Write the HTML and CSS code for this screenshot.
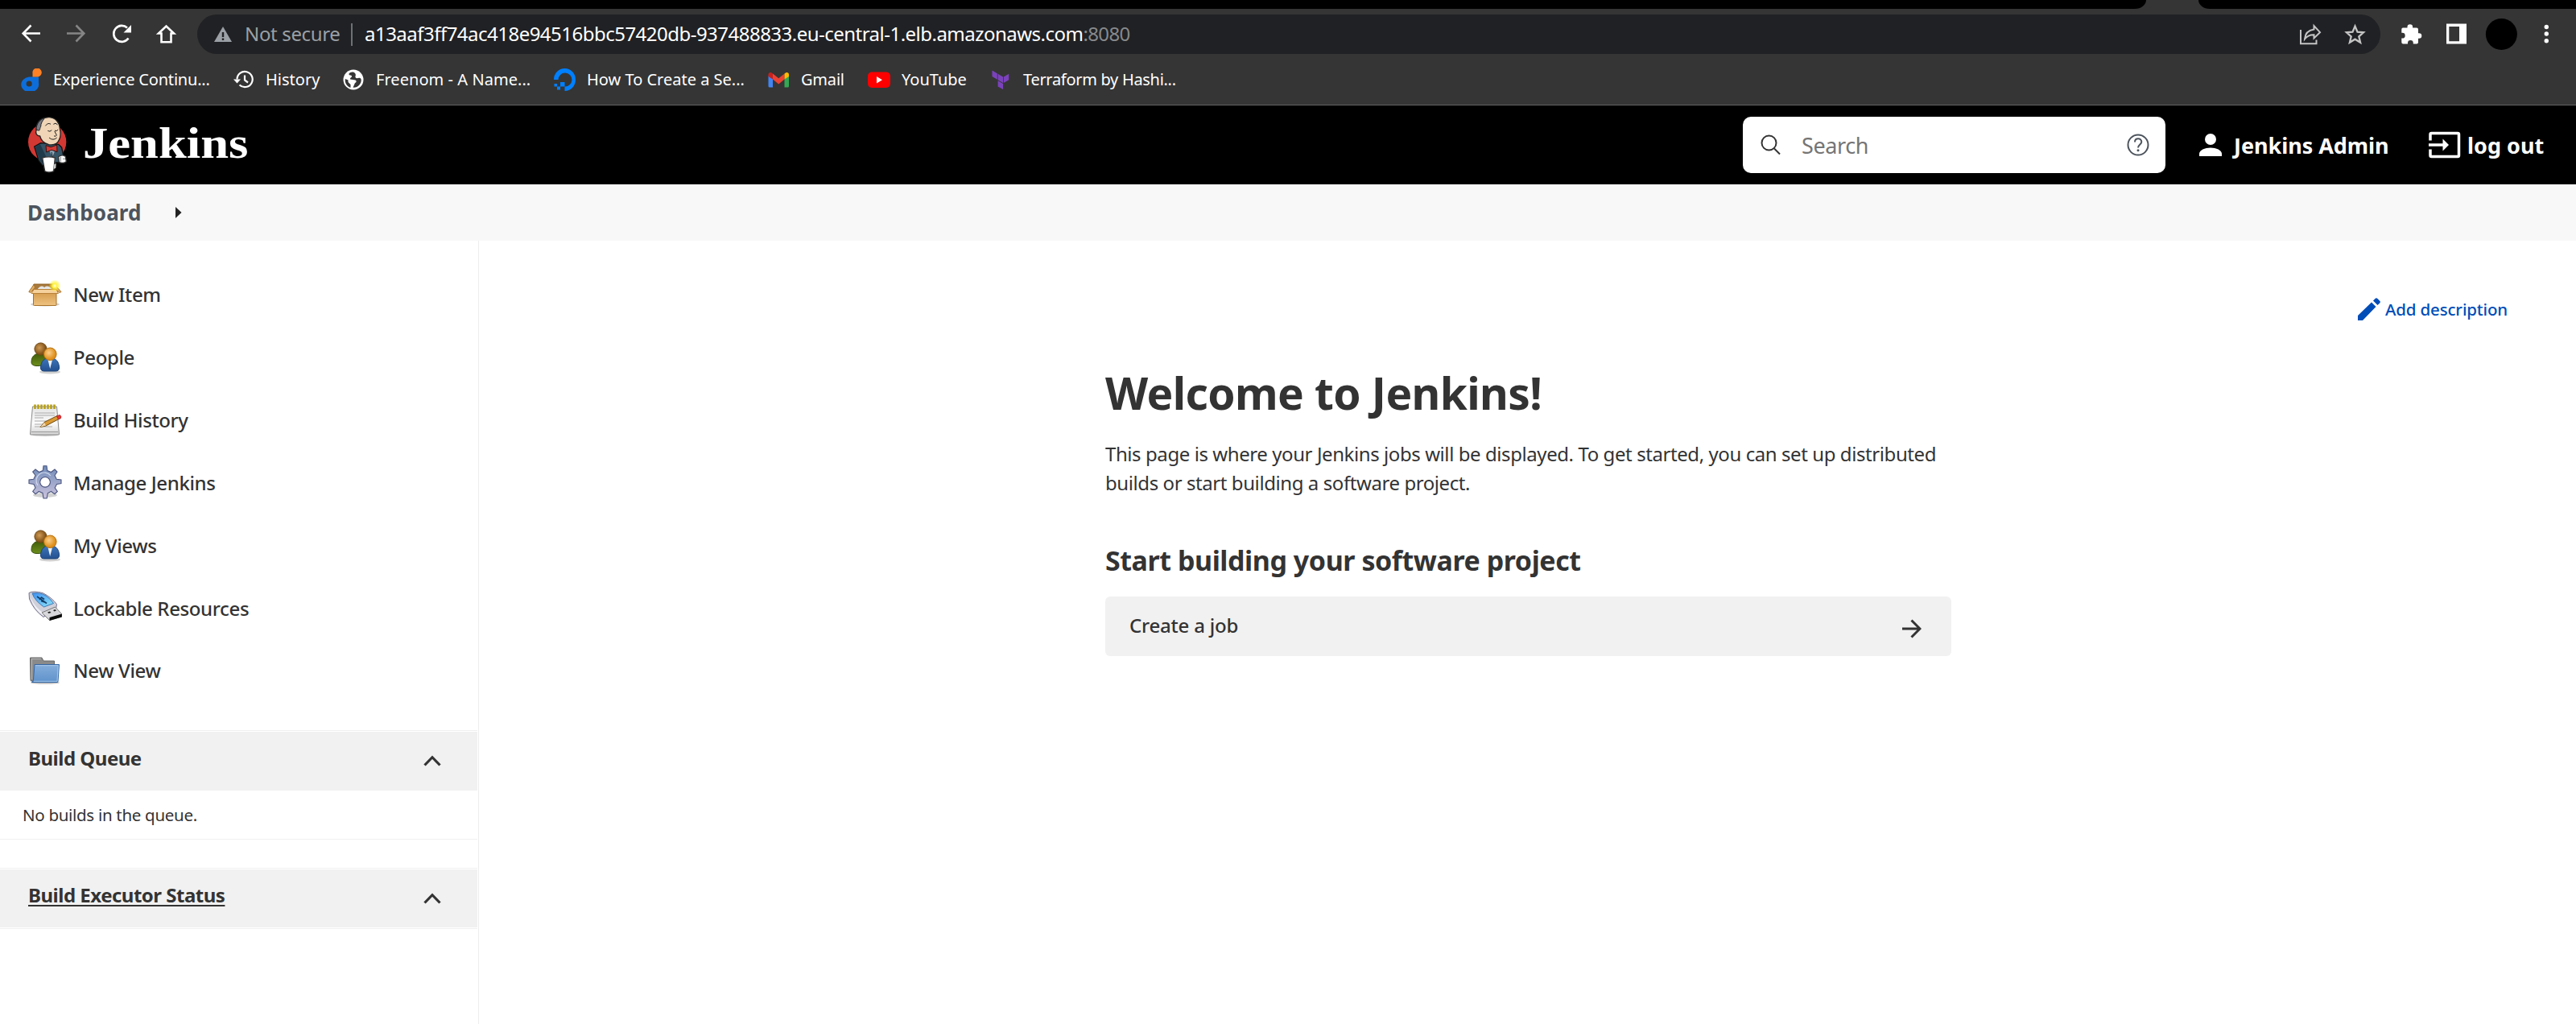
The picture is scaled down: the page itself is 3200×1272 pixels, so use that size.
FILE: index.html
```html
<!DOCTYPE html>
<html lang="en">
<head>
<meta charset="utf-8">
<title>Dashboard [Jenkins]</title>
<link rel="stylesheet" href="styles.css">
</head>
<body>
<div class="browser">
  <div class="tabstrip"><div class="tabs-left"></div><div class="tabs-right"></div></div>
  <div class="toolbar">
    <svg class="nav-icons" width="245" height="49" viewBox="0 18 245 49" fill="none" stroke="#fff" stroke-width="2.6">
      <path d="M50 41.5H29M38.5 31.5L28.7 41.5L38.5 51.5"/>
      <path stroke="#868686" d="M83 41.5H104M94.500 31.5L104.300 41.5L94.500 51.5"/>
      <path d="M159.500 47.500A10 10 0 1 1 158 34.500"/><path fill="#fff" stroke="none" d="M163 31V40.500H153.500Z"/>
      <path d="M200.500 52.300V41.500H197L206.500 32.500L216 41.500H212.500V52.300Z"/>
    </svg>
    <div class="omnibox">
      <svg width="22" height="20" viewBox="0 0 22 20"><path fill="#9aa0a6" d="M11 0L22 19H0Z"/><path stroke="#202124" stroke-width="2.4" d="M11 7V13M11 14.600V17"/></svg>
      <span class="insecure">Not secure</span>
      <i class="divider"></i>
      <span class="url">a13aaf3ff74ac418e94516bbc57420db-937488833.eu-central-1.elb.amazonaws.com</span><span class="port">:8080</span>
      <svg class="omni-actions" width="84" height="28" viewBox="2856 29 84 28" fill="none" stroke="#c4c4c4" stroke-width="2">
        <path d="M2858 37V54.200H2877.500V49.500M2863 48.500C2863.500 41 2868 37.500 2874.500 36.500V32L2882 40.200L2874.500 47.500V43.200C2869.500 43 2866 44.500 2863 48.500Z"/>
        <path stroke-width="2.300" d="M2925.500 32.500L2928.500 39.700L2936 40.300L2930.300 45.300L2932.100 52.800L2925.500 48.700L2918.900 52.800L2920.700 45.300L2915 40.300L2922.500 39.700Z"/>
      </svg>
    </div>
    <svg class="browser-icons" width="243" height="49" viewBox="2957 18 243 49" fill="#fff">
      <path d="M2985 34.500H2990.500V33.500A3.300 3.300 0 0 1 2997.100 33.500V34.500H3002Q3004 34.500 3004 36.500V41.200H3005A3.300 3.300 0 0 1 3005 47.800H3004V52.500Q3004 54.500 3002 54.500H2997.800V53.500A3.300 3.300 0 0 0 2991 53.500V54.500H2985.300Q2983.300 54.500 2983.300 52.500V47.600H2984.300A3.300 3.300 0 0 0 2984.300 40.800H2983.300V36.500Q2983.300 34.500 2985 34.500Z"/>
      <path fill-rule="evenodd" d="M3039 29.500H3064V54.500H3039ZM3042.300 33H3055V51.200H3042.300Z"/>
      <circle cx="3107.400" cy="42.500" r="19.500" fill="#000"/>
      <circle cx="3163.300" cy="33.500" r="2.700"/><circle cx="3163.300" cy="42" r="2.700"/><circle cx="3163.300" cy="50.700" r="2.700"/>
    </svg>
  </div>
  <div class="bookmarks">
    <div class="bm bm-1"><svg viewBox="0 0 28 28"><path fill="#0d6edb" d="M12 10.500H24V18A11 9.500 0 1 1 12 10.500Z"/><circle cx="12.200" cy="19" r="3.600" fill="#353535"/><path fill="#ff8125" d="M16.500 10.500V6A5.700 5.500 0 1 1 22.500 10.500Z"/></svg><span>Experience Continu...</span></div>
    <div class="bm bm-2"><svg viewBox="0 0 28 28" fill="none" stroke="#fff" stroke-width="2.200"><path d="M6.500 13.500A9.600 9.600 0 1 1 9.500 20.500M16 8.500V14.500L20 17.500"/><path fill="#fff" stroke="none" d="M2 13.500H11L6.500 18.500Z"/></svg><span>History</span></div>
    <div class="bm bm-3"><svg viewBox="0 0 28 28"><circle cx="14" cy="14" r="12.500" fill="#fff"/><path fill="#353535" d="M14 4.500C10 4.500 8 6 8.500 7.500C9 9 11.500 8 12 9.500C12.500 11 9.500 11.500 10 13.500L16.500 14.500C18.500 15.500 17.500 17.500 16 18L13.500 23.700C19 24.500 24 19.500 23.700 14C23.500 12.500 22.500 11 20 12C17.500 12.500 16 11.500 16.500 9.500C17.500 8 16.500 5.500 14 4.500ZM3.800 13C3 19 7.500 23.500 10.500 23.700V20L7.500 17V14.500Z"/></svg><span>Freenom - A Name...</span></div>
    <div class="bm bm-4"><svg viewBox="0 0 28 28" fill="#0080ff"><path d="M14.500 28V22.500A8.500 8.500 0 1 0 6.500 14H1A13.500 14 0 1 1 14.500 28ZM9 17H14.500V22.500H9ZM5 22.500H9V26.500H5ZM1.500 19H5V22.500H1.500Z"/></svg><span>How To Create a Se...</span></div>
    <div class="bm bm-5"><svg viewBox="0 0 28 28"><path fill="#4285f4" d="M1.500 9L7 13V23.500H3Q1.500 23.500 1.500 22Z"/><path fill="#34a853" d="M27 9L21.500 13V23.500H25.500Q27 23.500 27 22Z"/><path fill="#ea4335" d="M7 6.500L14.200 12.300L21.500 6.500V13.500L14.200 19.500L7 13.500Z"/><path fill="#c5221f" d="M1.500 10V7.500C1.500 4.500 5 4 7 6.500V13.500Z"/><path fill="#fbbc04" d="M27 10V7.500C27 4.500 23.500 4 21.500 6.500V13.500Z"/></svg><span>Gmail</span></div>
    <div class="bm bm-6"><svg viewBox="0 0 28 28"><rect x="0" y="4.500" width="28" height="19.500" rx="5" fill="#f00"/><path fill="#fff" d="M11 10V18.500L18 14.200Z"/></svg><span>YouTube</span></div>
    <div class="bm bm-7"><svg viewBox="0 0 28 28" fill="#7b42bc"><path d="M3.500 2.500L9.800 6.200V13.800L3.500 10ZM10.600 6.700L17 10.400V18L10.600 14.300ZM17.800 10.400L24.200 6.700V14.200L17.800 18ZM10.600 15.300L17 19V26L10.600 22.500Z"/></svg><span>Terraform by Hashi...</span></div>
  </div>
</div>

<header class="page-header">
  <a class="brand">
    <svg width="50" height="72" viewBox="42 132 150 216" stroke-linejoin="round">
      <circle cx="116" cy="229" r="71" fill="#d33833"/>
      <path fill="#355466" stroke="#111" stroke-width="4" d="M68 246L92 233L158 238L170 250L176 280L172 304L148 306L146 320L98 316L84 298Z"/>
      <path fill="#1f3a4b" d="M70 248L90 238L112 284L100 312L88 296Z"/>
      <path fill="#8fa9bb" d="M118 252L148 252L136 284Z"/>
      <path fill="#f0d6b7" stroke="#222" stroke-width="4" d="M76 172C80 148 102 136 124 137C148 139 162 158 163 178C166 192 168 206 161 220C155 235 140 242 122 239C105 235 92 222 89 207C77 208 71 196 75 186Z"/>
      <path fill="#777b86" stroke="#222" stroke-width="3" d="M75 184C75 162 88 144 106 140C98 152 92 158 92 172C88 176 90 188 84 186Z"/>
      <path fill="none" stroke="#222" stroke-width="3" stroke-linecap="round" d="M110 168Q118 156 128 162M140 162Q147 155 154 164M119 188Q126 193 132 186M145 187Q151 191 156 184M144 190L151 204Q148 211 142 207M124 214Q138 226 151 214"/>
      <path fill="#d33833" stroke="#311" stroke-width="3" d="M111 242L130 248L152 240L153 266L132 259L113 267Z"/>
      <path stroke="#222" stroke-width="3" d="M132 266L136 286"/>
      <path fill="#fff" stroke="#333" stroke-width="4" d="M98 288Q121 281 145 288L140 338Q122 346 107 338Z"/>
      <path fill="#ccc" d="M142 312L149 310L148 326L140 330Z"/>
      <path fill="#fff" stroke="#333" stroke-width="4" d="M158 284Q170 274 184 283L187 302Q174 312 160 304Z"/><path stroke="#444" stroke-width="2" d="M166 284V302M174 292H186"/>
    </svg>
    <span class="brand-name">Jenkins</span>
  </a>
  <div class="search">
    <svg width="26" height="26" viewBox="0 0 26 26" fill="none" stroke="#333" stroke-width="2"><circle cx="10.500" cy="10.500" r="9"/><path d="M17 17.500L24 24.500"/></svg>
    <span class="placeholder">Search</span>
    <svg width="28" height="28" viewBox="0 0 28 28" fill="none" stroke="#4d545d" stroke-width="2"><circle cx="14" cy="14" r="12.500"/><path d="M10 10.500C10 5 18.300 5 18.300 10.300C18.300 13.500 14 13.500 14 17.500"/><circle cx="14" cy="20.800" r="1.500" fill="#4d545d" stroke="none"/></svg>
  </div>
  <a class="user"><svg width="28" height="28" viewBox="0 0 28 28" fill="#fff"><circle cx="14" cy="7" r="7"/><path d="M0 28V25C0 20.500 7 17.500 14 17.500S28 20.500 28 25V28Z"/></svg><span>Jenkins Admin</span></a>
  <a class="logout"><svg width="40" height="34" viewBox="0 0 40 34" fill="none" stroke="#fff" stroke-width="3.500"><path d="M2 11.500V4Q2 2.500 3.500 2.500H36Q37.500 2.500 37.500 4V30Q37.500 31.500 36 31.500H3.500Q2 31.500 2 30V22.500M0 17H19"/><path fill="#fff" stroke="none" d="M17.500 9.500L25 17L17.500 24.500Z"/></svg><span>log out</span></a>
</header>

<nav class="breadcrumb"><span>Dashboard</span><svg width="8" height="14" viewBox="0 0 8 14"><path fill="#222" d="M0 0L7.500 7L0 14Z"/></svg></nav>

<svg class="defs" width="0" height="0">
  <defs>
    <linearGradient id="box" x2="0" y2="1"><stop stop-color="#d49b4c"/><stop offset="1" stop-color="#efc382"/></linearGradient>
    <radialGradient id="glow"><stop stop-color="#fffde0"/><stop offset=".35" stop-color="#fff34a"/><stop offset="1" stop-color="#fff200" stop-opacity="0"/></radialGradient>
    <radialGradient id="brown" cx=".4" cy=".4"><stop stop-color="#d09a55"/><stop offset="1" stop-color="#83551a"/></radialGradient>
    <radialGradient id="orange" cx=".4" cy=".4"><stop stop-color="#fbd08d"/><stop offset="1" stop-color="#e0911c"/></radialGradient>
    <linearGradient id="green" x2="0" y2="1"><stop stop-color="#3f5a0a"/><stop offset="1" stop-color="#6d8f1d"/></linearGradient>
    <linearGradient id="blue" x2="0" y2="1"><stop stop-color="#3d77bd"/><stop offset="1" stop-color="#24508f"/></linearGradient>
    <linearGradient id="gear" x2="0" y2="1"><stop stop-color="#6f8bb8"/><stop offset="1" stop-color="#ccc3dd"/></linearGradient>
    <linearGradient id="paper" x2="0" y2="1"><stop stop-color="#e4e4e4"/><stop offset=".6" stop-color="#fbfbfb"/><stop offset="1" stop-color="#d2d2d2"/></linearGradient>
    <linearGradient id="folder" x2="0" y2="1"><stop stop-color="#84addb"/><stop offset="1" stop-color="#5f92cb"/></linearGradient>
    <linearGradient id="usb" x2="1" y2="1"><stop stop-color="#3f8ff0"/><stop offset="1" stop-color="#8ee6f8"/></linearGradient>
    <symbol id="people" viewBox="0 0 42 42">
      <ellipse cx="27" cy="39" rx="13" ry="2.500" fill="#000" opacity=".18"/>
      <path fill="url(#green)" stroke="#37500a" d="M4 27C4 18 10 16 15.500 16S27 18 27 27Q20 32 10 31.500Q4 31 4 27Z"/>
      <circle cx="15.500" cy="10.500" r="7.600" fill="url(#brown)" stroke="#714812"/>
      <path fill="url(#blue)" stroke="#1f4479" d="M15.500 34C15.500 25 21 21.500 27 21.500S38.500 25 38.500 34Q38.500 38 34 38H20Q15.500 38 15.500 34Z"/>
      <path fill="#eef2f8" d="M24.500 24H30L27.200 35Z"/>
      <circle cx="27.300" cy="16.800" r="7.800" fill="url(#orange)" stroke="#b5700f"/>
    </symbol>
  </defs>
</svg>

<div class="page-body">
  <aside class="side-panel">
    <ul class="tasks">
      <li><svg viewBox="0 0 42 42"><ellipse cx="21" cy="33" rx="18" ry="2.500" fill="#000" opacity=".18"/><path fill="#a77a3e" stroke="#8f5f20" d="M7 8H33L36 16H5Z"/><path fill="#e6e6e6" d="M11 15Q16 8 20 12Q25 8 30 15Z"/><path fill="#e2b06a" stroke="#a8722a" d="M7 8.500L.8 17.500L3 18.500L8.500 12ZM34 10L41 17.500L39 18.500L32.500 13Z"/><path fill="url(#box)" stroke="#a8722a" d="M6.500 18H35V33.500Q35 34.500 34 34.500H7.500Q6.500 34.500 6.500 33.500Z"/><path fill="#f5d19c" stroke="#b9813a" d="M7 14.500H35L37.500 19.500H4Z"/><circle cx="33" cy="10" r="7.500" fill="url(#glow)"/></svg><span>New Item</span></li>
      <li><svg viewBox="0 0 42 42"><use href="#people"/></svg><span>People</span></li>
      <li><svg viewBox="0 0 42 42"><ellipse cx="21" cy="39.500" rx="16" ry="1.500" fill="#000" opacity=".2"/><path fill="url(#paper)" stroke="#8c8c8c" d="M5.500 4H35.500L38.500 38.500Q38.500 39 38 39H3Q2.500 39 2.500 38.500Z"/><path stroke="#999" d="M4 35.500H37"/><path stroke="#aaa" d="M8 12H33M8 15H33M8 18H19M8 22H27M8 26H22M8 29H30"/><path stroke="#b7a018" stroke-width="2.600" d="M8.500 1.500V7M12.500 1.500V7M16.500 1.500V7M20.500 1.500V7M24.500 1.500V7M28.500 1.500V7M32.500 1.500V7"/><path fill="#d99a35" stroke="#6e4a12" d="M15 29.500L20 23.500L36 15.500L38 19.500L22 28Z"/><path fill="#f3dab0" d="M15 29.500L20 24L22 27.500Z"/><path fill="#e33" stroke="#a33" d="M35.500 16L39 14.500Q42 16 40.500 18.500L37.500 20Z"/></svg><span>Build History</span></li>
      <li><svg viewBox="0 0 42 42"><ellipse cx="21" cy="37" rx="15" ry="3" fill="#000" opacity=".18"/><path fill="url(#gear)" fill-rule="evenodd" stroke="#4c5680" stroke-width="1.100" d="M18.300 6.500L19 .8H23L23.700 6.500L28.500 8.500L33 5L36 8L33 12.500L35.200 17.300L41 18V22.500L35.500 23.500L33.200 28L36.300 32.500L33 35.700L28.500 32.500L24.300 34.500L23.200 41H19L18 34.500L13.300 32.500L9 35.700L5.700 32.500L9 28L7 23.500L1 22.500V18L6.800 17.300L9 12.500L5.700 8L9 5L13.500 8.500ZM21 14.500A6.300 6.300 0 1 0 21.100 14.500Z"/><path fill="none" stroke="#dfe5f4" stroke-width="1.200" opacity=".8" d="M12 25A10 10 0 0 1 28 13"/></svg><span>Manage Jenkins</span></li>
      <li><svg viewBox="0 0 42 42"><use href="#people"/></svg><span>My Views</span></li>
      <li><svg viewBox="0 0 42 42"><path fill="#cfd0da" stroke="#77728f" d="M1 2.500Q6-.5 18 2.500Q29 8 35.500 16.500L34.500 23L19 32.500Q7 24 1.500 10Z"/><path fill="#f1f1f5" d="M4 10Q8 20 19.500 28L19.500 31Q7 23 3 9Z"/><path fill="url(#usb)" stroke="#3c78b8" d="M5 3Q15 1.500 22 6Q29 11 31.500 15.500L19.500 20Q8 12 5 3Z"/><path fill="none" stroke="#123d66" stroke-width="1.600" d="M11 7L23 15.500M14 11L16.500 8L20 10.500M16 12.500L20.500 14"/><path fill="#d8d8dc" stroke="#777" d="M17 27L33.500 20L41.500 28.500V32L26.500 36.500Z"/><path fill="#0a0a0a" d="M26.500 33L41.800 28.500V32.500L26.500 37Z"/><path fill="#222" d="M24 26.500L27 25.500L28.500 27L25.500 28ZM31 24L33.500 23L35 24.500L32.500 25.500Z"/></svg><span>Lockable Resources</span></li>
      <li><svg viewBox="0 0 42 42"><ellipse cx="21" cy="36" rx="18" ry="1.800" fill="#000" opacity=".25"/><path fill="#8a8a8a" stroke="#666" d="M2.500 5H17L19 9H32.500V34H4Q3 34 3 33Z"/><path stroke="#b5b5b5" d="M4 6.500H16M4.500 6.500V32"/><path fill="url(#folder)" stroke="#3568a6" d="M8 13.500H38.500L37 34.500Q37 35.500 36 35.500H4.500Q6.500 34 6.500 32Z"/><path fill="none" stroke="#a8c8ea" d="M9 14.700H37.200L36 34.300H7"/></svg><span>New View</span></li>
    </ul>
    <section class="pane">
      <div class="pane-head"><span>Build Queue</span><svg width="22" height="14" viewBox="0 0 22 14"><path fill="none" stroke="#333" stroke-width="3.200" d="M1.500 12.500L11 2.700L20.500 12.500"/></svg></div>
      <div class="pane-content">No builds in the queue.</div>
    </section>
    <section class="pane executors">
      <div class="pane-head"><a>Build Executor Status</a><svg width="22" height="14" viewBox="0 0 22 14"><path fill="none" stroke="#333" stroke-width="3.200" d="M1.500 12.500L11 2.700L20.500 12.500"/></svg></div>
    </section>
  </aside>
  <main class="main-panel">
    <a class="add-description"><svg width="28" height="28" viewBox="0 0 28 28" fill="#004db8"><path d="M0 28V22L17 5.500L22.500 11L6 28ZM19 3.500L21.500 1Q23 -.5 24.500 1L27.200 3.800Q28.500 5 27.200 6.500L24.500 9Z"/></svg><span>Add description</span></a>
    <div class="empty-state">
      <h1>Welcome to Jenkins!</h1>
      <p>This page is where your Jenkins jobs will be displayed. To get started, you can set up distributed<br>builds or start building a software project.</p>
      <h2>Start building your software project</h2>
      <a class="job-link"><span>Create a job</span><svg width="24" height="24" viewBox="0 0 24 24" fill="none" stroke="#333" stroke-width="3"><path d="M0 12H22M11.500 1.500L22 12L11.500 22.500"/></svg></a>
    </div>
  </main>
</div>
</body>
</html>
```
FILE: styles.css
```css
* { box-sizing: border-box; }
body {
  margin: 0;
  width: 3200px;
  height: 1272px;
  overflow: hidden;
  background: #fff;
  color: #333;
  font-family: "Noto Sans", "Open Sans", sans-serif;
  font-size: 24px;
}
svg { display: block; flex: none; }
span, a { white-space: nowrap; }
.defs { height: 0; }

/* Browser chrome */
.browser { background: #353535; border-bottom: 1px solid #626262; height: 131px; }
.tabstrip { display: flex; justify-content: space-between; height: 11px; }
.tabs-left { width: 2666px; background: #000; border-bottom-right-radius: 14px 11px; }
.tabs-right { width: 469px; background: #000; border-bottom-left-radius: 14px 11px; }
.toolbar { display: flex; padding-top: 7px; height: 56px; }
.omnibox {
  display: flex;
  align-items: center;
  width: 2712px;
  height: 49px;
  padding: 0 17px 0 21px;
  border-radius: 25px;
  background: #202124;
  line-height: 47px;
}
.omnibox span { height: 49px; }
.insecure { margin-left: 16px; width: 132px; color: #9aa0a6; letter-spacing: -.35px; }
.divider { width: 2px; height: 28px; margin-right: 15px; background: #6d7074; }
.url { color: #fff; letter-spacing: -.52px; }
.port { color: #87898c; letter-spacing: -.6px; }
.omni-actions { margin-left: auto; }
.bookmarks { display: flex; align-items: center; height: 63px; padding-left: 24px; color: #fff; font-size: 20px; line-height: 28px; }
.bm { display: flex; align-items: center; gap: 14px; }
.bm svg { width: 28px; height: 28px; }
.bm-1 { width: 264px; letter-spacing: -.19px; }
.bm-2 { width: 137px; }
.bm-3 { width: 262px; letter-spacing: .05px; }
.bm-4 { width: 266px; }
.bm-5 { width: 125px; letter-spacing: -.2px; }
.bm-6 { width: 151px; }
.bm-7 { letter-spacing: -.3px; }

/* Jenkins header */
.page-header { display: flex; align-items: center; height: 98px; padding-left: 34px; background: #000; color: #fff; font-size: 27px; font-weight: 700; }
.brand { display: flex; align-items: center; width: 2131px; gap: 19px; }
.brand-name { font: 700 54px/60px "Liberation Serif", serif; transform: scaleX(1.16); transform-origin: left; margin-bottom: 5px; }
.search { display: flex; align-items: center; width: 525px; height: 70px; padding: 0 20px 0 22px; border-radius: 10px; background: #fff; }
.placeholder { flex: 1; padding-left: 25px; color: #757575; font-weight: 400; letter-spacing: -.4px; }
.user, .logout { display: flex; align-items: center; }
.user { margin-left: 42px; gap: 15px; width: 285px; letter-spacing: -.05px; }
.logout { gap: 8px; }

.breadcrumb { display: flex; align-items: center; gap: 42px; height: 70px; padding-left: 34px; background: #f8f8f8; color: #4d545d; font-size: 26px; font-weight: 700; letter-spacing: .15px; }

/* Page body */
.page-body { display: flex; height: 973px; }
.side-panel { width: 595px; padding-top: 28px; border-right: 1px solid #eee; }
.tasks { margin: 0; padding: 0; list-style: none; }
.tasks li { display: flex; align-items: center; gap: 14px; height: 77.83px; padding-left: 35px; font-weight: 500; letter-spacing: -.38px; }
.tasks svg { width: 42px; height: 42px; }
.pane { margin-top: 35px; width: 593px; border-top: 1px solid #f0f0f0; border-bottom: 1px solid #f0f0f0; padding-top: 1px; }
.pane-head { display: flex; justify-content: space-between; align-items: center; height: 73px; padding: 0 45px 0 35px; background: #f1f1f1; font-weight: 700; letter-spacing: -.5px; }
.pane-head span, .pane-head a { padding-bottom: 8px; }
.pane-head a { text-decoration: underline; text-decoration-thickness: 2px; text-underline-offset: 3px; text-decoration-skip-ink: none; }
.pane-content { height: 60px; padding-left: 28px; line-height: 60px; font-size: 20.5px; letter-spacing: -.3px; }
.executors { padding-bottom: 1px; }
.executors .pane-head { height: 72px; }

.main-panel { flex: 1; padding: 65px 85px 0 0; }
.add-description { display: flex; justify-content: flex-end; align-items: center; gap: 6px; height: 40px; color: #004db8; font-size: 20.5px; font-weight: 500; letter-spacing: -.15px; }
.empty-state { width: 1051px; margin: 51px 0 0 778px; }
h1 { margin: 0; font-size: 55px; line-height: 66px; font-weight: 700; letter-spacing: -.6px; }
p { margin: 25px 0 56px; line-height: 36px; letter-spacing: -.42px; white-space: nowrap; }
h2 { margin: 0 0 23px; font-size: 34px; line-height: 44px; font-weight: 700; letter-spacing: -.45px; }
.job-link { display: flex; justify-content: space-between; align-items: center; height: 74px; padding: 0 37px 0 30px; border-radius: 6px; background: #f1f1f1; font-weight: 500; letter-spacing: -.2px; }
.job-link span { padding-bottom: 4px; }
.job-link svg { margin-top: 5px; }
```
